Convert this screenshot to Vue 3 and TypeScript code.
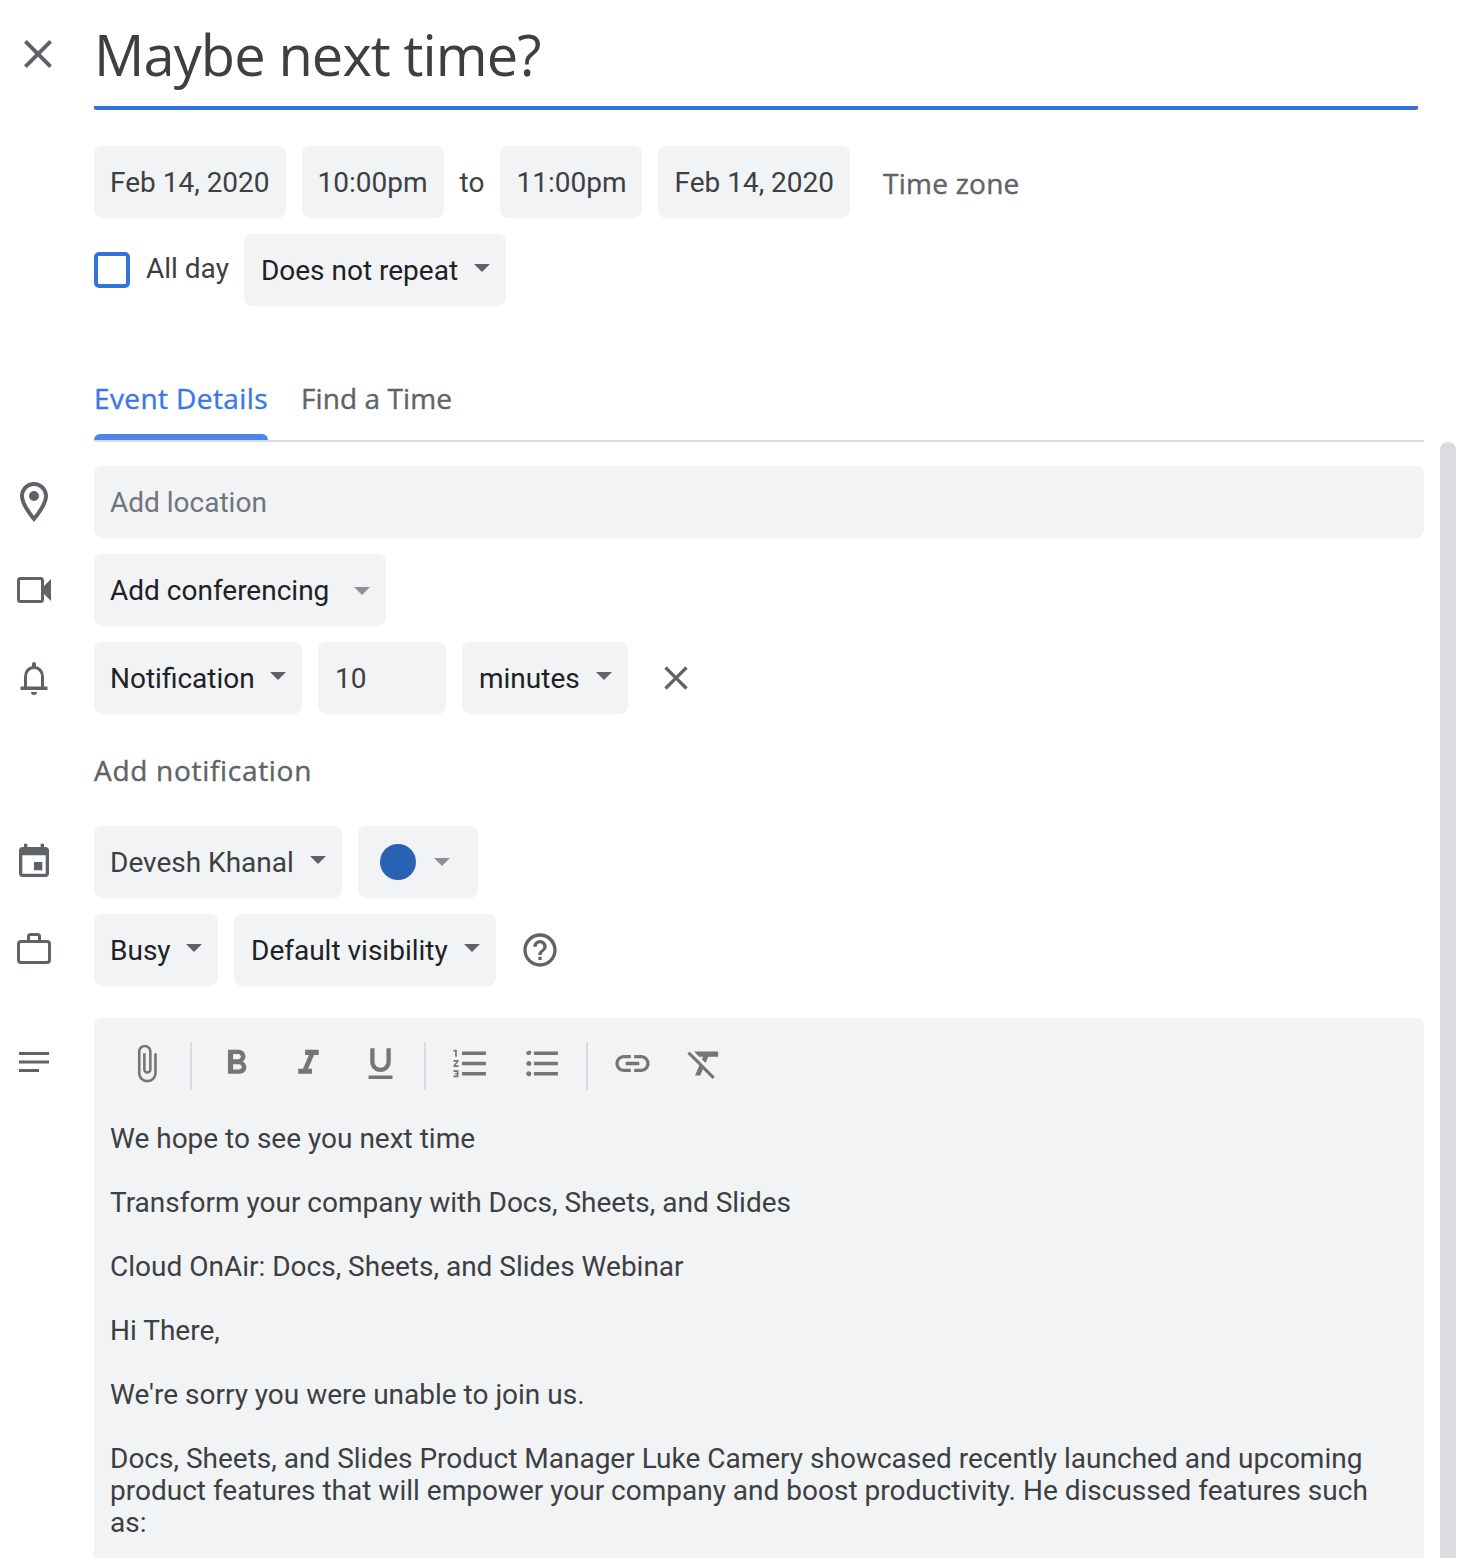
<script setup lang="ts">
const iconPaths: Record<string, string> = {
  close: "M19 6.41L17.59 5 12 10.59 6.41 5 5 6.41 10.59 12 5 17.59 6.41 19 12 13.41 17.59 19 19 17.59 13.41 12z",
  place: "M12 2C8.13 2 5 5.13 5 9c0 5.25 7 13 7 13s7-7.75 7-13c0-3.87-3.13-7-7-7zM7 9c0-2.76 2.24-5 5-5s5 2.24 5 5c0 2.88-2.88 7.19-5 9.88C9.92 16.21 7 11.85 7 9zm5-2.5a2.5 2.5 0 1 0 0 5 2.5 2.5 0 0 0 0-5z",
  event: "M17 12h-5v5h5v-5zM16 1v2H8V1H6v2H5c-1.11 0-1.99.9-1.99 2L3 19c0 1.1.89 2 2 2h14c1.1 0 2-.9 2-2V5c0-1.1-.9-2-2-2h-1V1h-2zm3 18H5V8h14v11z",
  help: "M11 18h2v-2h-2v2zm1-16C6.48 2 2 6.48 2 12s4.48 10 10 10 10-4.48 10-10S17.52 2 12 2zm0 18c-4.41 0-8-3.59-8-8s3.59-8 8-8 8 3.59 8 8-3.59 8-8 8zm0-14c-2.21 0-4 1.79-4 4h2c0-1.1.9-2 2-2s2 .9 2 2c0 2-3 1.75-3 5h2c0-2.25 3-2.5 3-5 0-2.21-1.79-4-4-4z",
};

const toolbarGroups: string[][] = [
  ["M16.5 6v11.5c0 2.21-1.79 4-4 4s-4-1.79-4-4V5c0-1.38 1.12-2.5 2.5-2.5s2.5 1.12 2.5 2.5v10.5c0 .55-.45 1-1 1s-1-.45-1-1V6H10v9.5c0 1.38 1.12 2.5 2.5 2.5s2.5-1.12 2.5-2.5V5c0-2.21-1.79-4-4-4S7 2.79 7 5v12.5c0 3.04 2.46 5.5 5.5 5.5s5.5-2.46 5.5-5.5V6h-1.5z"],
  [
    "M15.6 10.79c.97-.67 1.65-1.77 1.65-2.79 0-2.26-1.75-4-4-4H7v14h7.04c2.09 0 3.71-1.7 3.71-3.79 0-1.52-.86-2.82-2.15-3.42zM10 6.5h3c.83 0 1.5.67 1.5 1.5s-.67 1.5-1.5 1.5h-3v-3zm3.5 9H10v-3h3.5c.83 0 1.5.67 1.5 1.5s-.67 1.5-1.5 1.5z",
    "M10 4v3h2.21l-3.42 8H6v3h8v-3h-2.21l3.42-8H18V4z",
    "M12 17c3.31 0 6-2.69 6-6V3h-2.5v8c0 1.93-1.57 3.5-3.5 3.5S8.5 12.93 8.5 11V3H6v8c0 3.31 2.69 6 6 6zm-7 2v2h14v-2H5z",
  ],
  [
    "M2 17h2v.5H3v1h1v.5H2v1h3v-4H2v1zm1-9h1V4H2v1h1v3zm-1 3h1.8L2 13.1v.9h3v-1H3.2L5 10.9V10H2v1zm5-6v2h14V5H7zm0 14h14v-2H7v2zm0-6h14v-2H7v2z",
    "M4 10.5c-.83 0-1.5.67-1.5 1.5s.67 1.5 1.5 1.5 1.5-.67 1.5-1.5-.67-1.5-1.5-1.5zm0-6c-.83 0-1.5.67-1.5 1.5S3.17 7 4 7s1.5-.67 1.5-1.5S4.83 4.5 4 4.5zm0 12c-.83 0-1.5.68-1.5 1.5s.68 1.5 1.5 1.5 1.5-.68 1.5-1.5-.67-1.5-1.5-1.5zM7 19h14v-2H7v2zm0-6h14v-2H7v2zm0-8v2h14V5H7z",
  ],
  [
    "M3.9 12c0-1.71 1.39-3.1 3.1-3.1h4V7H7c-2.76 0-5 2.24-5 5s2.24 5 5 5h4v-1.9H7c-1.71 0-3.1-1.39-3.1-3.1zM8 13h8v-2H8v2zm9-6h-4v1.9h4c1.71 0 3.1 1.39 3.1 3.1s-1.39 3.1-3.1 3.1h-4V17h4c2.76 0 5-2.24 5-5s-2.24-5-5-5z",
    "M3.27 5L2 6.27l6.97 6.97L6.5 19h3l1.57-3.66L16.73 21 18 19.73 3.55 5.27 3.27 5zM6 5v.18L8.82 8h2.4l-.72 1.68 2.1 2.1L14.21 8H20V5H6z",
  ],
];

const paragraphs = [
  "We hope to see you next time",
  "Transform your company with Docs, Sheets, and Slides",
  "Cloud OnAir: Docs, Sheets, and Slides Webinar",
  "Hi There,",
  "We're sorry you were unable to join us.",
  "Docs, Sheets, and Slides Product Manager Luke Camery showcased recently launched and upcoming product features that will empower your company and boost productivity. He discussed features such as:",
];
</script>

<template>
  <div class="page">
    <div class="title-row">
      <svg class="close-icon" viewBox="0 0 24 24"><path :d="iconPaths.close" /></svg>
      <div class="title">Maybe next time?</div>
    </div>

    <div class="row indent date-row">
      <div class="field">Feb 14, 2020</div>
      <div class="field">10:00pm</div>
      <span class="to">to</span>
      <div class="field">11:00pm</div>
      <div class="field">Feb 14, 2020</div>
      <span class="link-label time-zone">Time zone</span>
    </div>

    <div class="row indent">
      <span class="checkbox"></span>
      <span class="all-day">All day</span>
      <div class="field dark repeat">Does not repeat<i class="arrow"></i></div>
    </div>

    <div class="tabs">
      <span class="tab active">Event Details</span>
      <span class="tab">Find a Time</span>
    </div>

    <div class="row location-row">
      <div class="slot">
        <svg class="side-icon" viewBox="0 0 24 24"><path :d="iconPaths.place" /></svg>
      </div>
      <div class="field location">Add location</div>
    </div>

    <div class="row">
      <div class="slot">
        <svg class="side-icon" viewBox="0 0 48 48">
          <rect x="8.5" y="12.5" width="24" height="23" rx="2" class="line" />
          <path d="M34 20l7-7v22l-7-7z" />
        </svg>
      </div>
      <div class="field dark w-conference">Add conferencing<i class="arrow light"></i></div>
    </div>

    <div class="row">
      <div class="slot">
        <svg class="side-icon" viewBox="0 0 48 48">
          <path class="line" d="M15.500 33V22.500c0-5 3.500-9 8.500-9s8.500 4 8.500 9V33" />
          <path d="M10.500 32.500h27V36h-27zM22 10a2 2 0 0 1 4 0v3h-4zM21 38h6a3 3 0 0 1-6 0z" />
        </svg>
      </div>
      <div class="field dark w-notification">Notification<i class="arrow"></i></div>
      <div class="field number">10</div>
      <div class="field dark w-minutes">minutes<i class="arrow"></i></div>
      <svg class="notif-close" viewBox="0 0 24 24"><path :d="iconPaths.close" /></svg>
    </div>

    <div class="row indent add-row">
      <span class="link-label add-label">Add notification</span>
    </div>

    <div class="row">
      <div class="slot">
        <svg class="event-icon" viewBox="0 0 24 24"><path :d="iconPaths.event" /></svg>
      </div>
      <div class="field">Devesh Khanal<i class="arrow"></i></div>
      <div class="field color-field">
        <span class="dot"></span>
        <i class="arrow light color-arrow"></i>
      </div>
    </div>

    <div class="row">
      <div class="slot">
        <svg class="side-icon" viewBox="0 0 48 48">
          <rect x="8.500" y="15.500" width="31" height="21" rx="2.500" class="line" />
          <path class="line" d="M18.500 15v-4.500a2 2 0 0 1 2-2h7a2 2 0 0 1 2 2V15" />
        </svg>
      </div>
      <div class="field dark w-busy">Busy<i class="arrow"></i></div>
      <div class="field dark w-visibility">Default visibility<i class="arrow"></i></div>
      <svg class="help-icon" viewBox="0 0 24 24"><path :d="iconPaths.help" /></svg>
    </div>

    <div class="row description-row">
      <div class="slot">
        <svg class="notes-icon" viewBox="0 0 30 20">
          <path d="M0 0h30v3H0zM0 8.500h30v3H0zM0 17h20v3H0z" />
        </svg>
      </div>
      <div class="editor">
        <div class="toolbar">
          <template v-for="(group, g) in toolbarGroups" :key="g">
            <span v-if="g > 0" class="divider"></span>
            <span v-for="(d, i) in group" :key="i" class="tool">
              <svg viewBox="0 0 24 24"><path :d="d" /></svg>
            </span>
          </template>
        </div>
        <div class="body-text">
          <p v-for="(text, i) in paragraphs" :key="i">{{ text }}</p>
        </div>
      </div>
    </div>

    <div class="scrollbar"></div>
  </div>
</template>

<style>
html,
body {
  margin: 0;
  background: #fff;
}
</style>

<style scoped>
.page {
  position: relative;
  width: 1466px;
  height: 1558px;
  overflow: hidden;
  display: flex;
  flex-direction: column;
  gap: 16px;
  background: #fff;
  color: #3c4043;
  font-family: Roboto, "Liberation Sans", sans-serif;
  font-size: 28px;
  line-height: 32px;
}

.page > * {
  flex: none;
}

.title-row {
  display: flex;
  align-items: flex-start;
  margin-bottom: 20px;
}

.close-icon {
  width: 48px;
  height: 48px;
  margin: 30px 32px 0 14px;
  fill: #5f6368;
  flex: none;
}

.title {
  width: 1324px;
  height: 106px;
  border-bottom: 4px solid #3273e0;
  border-radius: 0 0 2px 2px;
  font-family: "Open Sans", Roboto, sans-serif;
  font-size: 56px;
  line-height: 108px;
  letter-spacing: -0.9px;
  text-indent: 0;
  color: #3c4043;
}

.row {
  display: flex;
  align-items: center;
  gap: 16px;
}

.indent {
  padding-left: 94px;
}

.slot {
  width: 68px;
  margin-right: 10px;
  display: flex;
  justify-content: center;
  flex: none;
}

.side-icon {
  width: 48px;
  height: 48px;
  fill: #5f6368;
}

.side-icon .line {
  fill: none;
  stroke: #5f6368;
  stroke-width: 3;
}

.event-icon {
  width: 40px;
  height: 40px;
  fill: #5f6368;
}

.field {
  height: 72px;
  box-sizing: border-box;
  display: flex;
  align-items: center;
  padding: 2px 16px 0;
  border-radius: 8px;
  background: #f1f3f4;
  white-space: nowrap;
}

.field.dark {
  color: #202124;
}

.arrow {
  display: block;
  width: 0;
  height: 0;
  margin: -6px 0 0 auto;
  border-left: 8px solid transparent;
  border-right: 8px solid transparent;
  border-top: 8px solid #5f6368;
}

.field:not([class*="w-"]) .arrow {
  margin-left: 16px;
}

.arrow.light {
  border-top-color: #8d9196;
  margin-top: 0;
}

.w-conference {
  width: 292px;
}

.w-notification {
  width: 208px;
}

.w-minutes {
  width: 166px;
  padding-left: 17px;
}

.w-busy {
  width: 124px;
}

.w-visibility {
  width: 262px;
  padding-left: 17px;
}

.to {
  margin-top: 2px;
}

.link-label {
  font-family: "Open Sans", Roboto, sans-serif;
  font-weight: 500;
  -webkit-text-stroke: 0.4px currentColor;
  color: #5f6368;
}

.time-zone {
  margin: 2px 0 0 17px;
  letter-spacing: 0.25px;
}

.add-label {
  letter-spacing: 0.7px;
}

.checkbox {
  width: 36px;
  height: 36px;
  box-sizing: border-box;
  border: 4px solid #3273e0;
  border-radius: 5px;
}

.all-day {
  margin-top: -2px;
  margin-right: -1px;
}

.repeat {
  padding-left: 17px;
}

.tabs {
  display: flex;
  gap: 33px;
  margin: 44px 42px 8px 94px;
  height: 74px;
  border-bottom: 2px solid #dadce0;
}

.tab {
  position: relative;
  height: 74px;
  line-height: 64px;
  font-family: "Open Sans", Roboto, sans-serif;
  font-weight: 500;
  -webkit-text-stroke: 0.4px currentColor;
  letter-spacing: 0.1px;
  color: #5f6368;
}

.tab.active {
  color: #3b78e7;
  letter-spacing: 0.4px;
}

.tab.active::after {
  content: "";
  position: absolute;
  left: 0;
  right: 0;
  bottom: 0;
  height: 6px;
  border-radius: 6px 6px 0 0;
  background: #5086ec;
}

.location {
  width: 1330px;
  color: #70757a;
}

.number {
  width: 128px;
  padding-left: 17px;
}

.notif-close {
  width: 40px;
  height: 40px;
  margin-left: 12px;
  fill: #5f6368;
}

.add-row {
  height: 80px;
}

.color-field {
  width: 120px;
  padding: 0 0 0 22px;
}

.dot {
  width: 36px;
  height: 36px;
  border-radius: 50%;
  background: #2a62b3;
}

.color-arrow {
  margin-left: 18px !important;
}

.help-icon {
  width: 40px;
  height: 40px;
  margin-left: 8px;
  fill: #5f6368;
}

.description-row {
  align-items: flex-start;
  margin-top: 16px;
}

.notes-icon {
  width: 30px;
  height: 20px;
  margin-top: 34px;
  fill: #5f6368;
}

.editor {
  width: 1330px;
  height: 700px;
  padding: 24px 16px 0;
  box-sizing: border-box;
  border-radius: 8px;
  background: #f1f3f4;
}

.toolbar {
  display: flex;
  align-items: center;
  height: 48px;
}

.tool {
  width: 72px;
  height: 48px;
  display: flex;
  align-items: center;
  justify-content: center;
}

.tool svg {
  width: 41px;
  height: 41px;
  margin: -6px 0 0 0;
  fill: #757575;
}

.divider {
  width: 2px;
  height: 48px;
  margin: 0 8px;
  background: #dadce0;
}

.body-text {
  margin-top: 32px;
  padding-top: 1px;
  color: #3c4043;
}

.body-text p {
  margin: 0 0 32px;
}

.scrollbar {
  position: absolute;
  left: 1440px;
  top: 442px;
  bottom: 0;
  width: 16px;
  border-radius: 8px 8px 0 0;
  background: #dadce0;
}
</style>
